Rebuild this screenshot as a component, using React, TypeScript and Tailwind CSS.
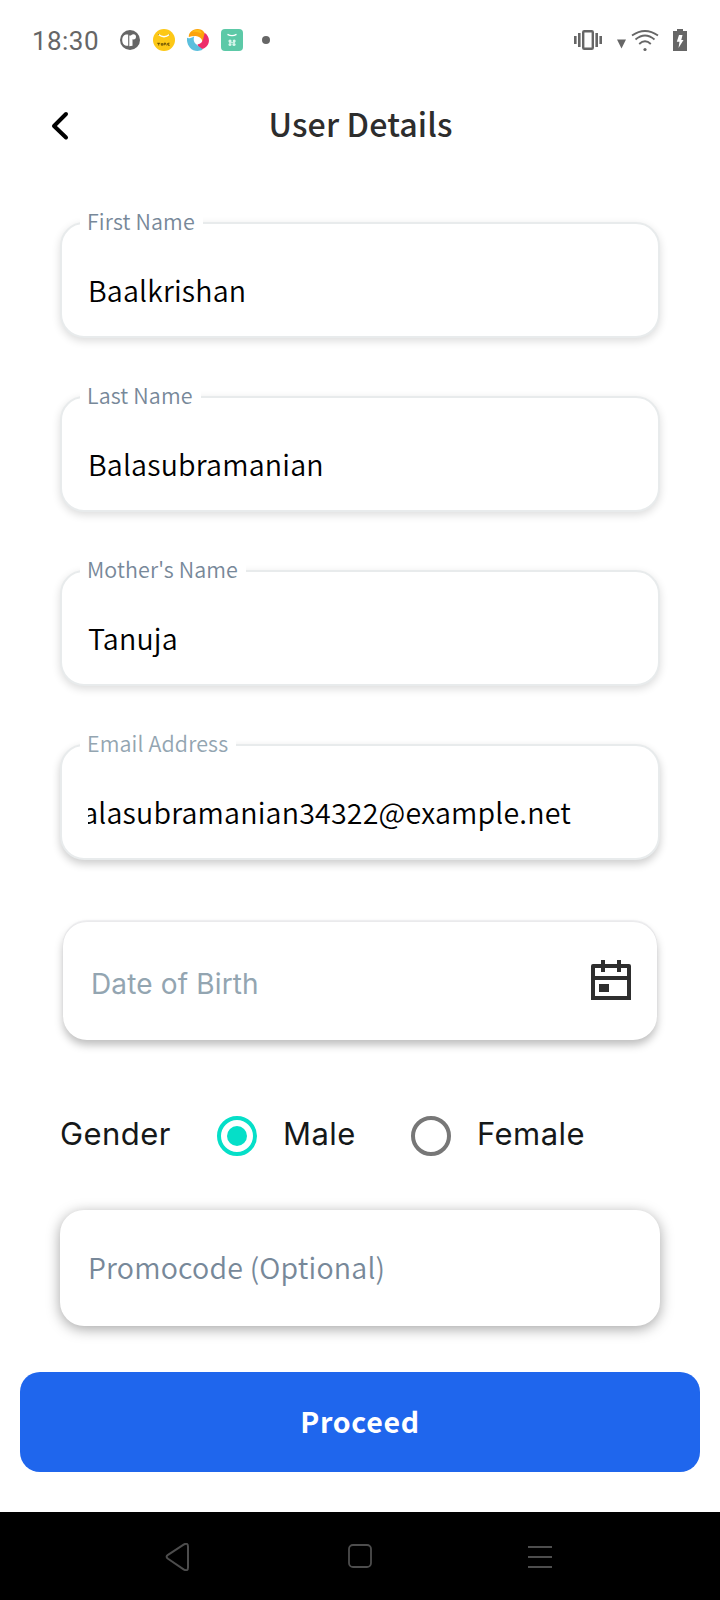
import type { ReactNode } from "react";

const sans = "font-['Noto_Sans_CJK_JP','Noto_Sans_CJK_SC',sans-serif]";

function StatusBar() {
  return (
    <div className="flex h-20 items-center pl-8 pr-8 text-[#666]">
      <span className="w-[67px] whitespace-nowrap font-[Roboto,sans-serif] text-[26px] leading-none tracking-[0.450px] mt-[2px]">18:30</span>
      <svg className="ml-[21px]" width="20" height="20" viewBox="0 0 20 20">
        <circle cx="10" cy="10" r="10" fill="#666" />
        <path d="M5.800 4.500H8.200v11.200H6Q2.200 14.500 2.200 10T5.800 4.500Z" fill="#fff" />
        <path d="M9.300 5.500h3.200v10.200l-3.200.6Z" fill="#fff" />
        <circle cx="13.400" cy="6.800" r="2.600" fill="#fff" />
      </svg>
      <svg className="ml-[13px]" width="22" height="22" viewBox="0 0 22 22">
        <circle cx="11" cy="11" r="11" fill="#fdc816" />
        <path d="M5.500 5.500q5.500 4.500 11 0" fill="none" stroke="#fff" strokeWidth="1.300" />
        <path d="M5.500 5.500l.5.500m10-.5l.5.300" stroke="#664b00" strokeWidth="1" />
        <path d="M4.200 14.300h3m-1.500 0v2.200M8.300 14.600h1.500v1.600H8.300Zm2.800 1.800v-2.200h1.600v1h-1.400m2.400 1.200 1-2.100m1.800-.1h-1.300v2.100h1.500" fill="none" stroke="#4f3b00" strokeWidth=".8" />
      </svg>
      <svg className="ml-3" width="22" height="22" viewBox="0 0 22 22">
        <path d="M1.800 8C1.500 4 5 .2 10.500 0c4-.1 7.400 2.500 7.600 6.300.1 2.300-.7 5-2.300 7.200C15.300 10 12.800 7.600 9.800 7.200 7 6.800 4.300 7.200 1.800 8Z" fill="#fca30b" />
        <path d="M4.500 3Q8 0 12 .8q2.500 1.200 2.800 3.700Q9 2 4.500 3Z" fill="#fdbe14" />
        <path d="M17.600 3.800c3.700 2.600 5.300 6.900 3.800 10.600-1.500 3.800-5.400 6.200-9.400 5.400l-1.500-4.300c3.200-.6 5-2.500 5.600-5.200.5-2.400 1.300-4.500 1.500-6.500Z" fill="#ed2d6b" />
        <path d="M0 8.800c1.600 1 4 .4 7.300-1.600-1.300 3.300-.5 6.300 2.300 8.300 1.500 2 4.400 2.900 6.100 5C11.500 23 6.200 22.200 3 18.700.6 16-.4 12.300 0 8.800Z" fill="#5bbfdd" />
      </svg>
      <svg className="ml-3" width="22" height="22" viewBox="0 0 22 22">
        <rect width="22" height="22" rx="4" fill="#5cc9a7" />
        <path d="M6.500 5.300q4.500 2.700 9 0" fill="none" stroke="#fff" strokeWidth="1.400" />
        <g fill="#d8f7ec">
          <circle cx="9" cy="12" r="1.600" />
          <circle cx="13.200" cy="12" r="1.500" />
          <circle cx="9" cy="15.500" r="1.500" />
          <circle cx="13" cy="15.500" r="1.600" />
          <path d="M8 13.200h6v1H8Z" />
        </g>
      </svg>
      <span className="ml-[19px] size-2 rounded-full bg-[#666]" />
      <svg className="ml-auto" width="28" height="20" viewBox="0 0 28 20" fill="#666">
        <path d="M0 6h2.600v8H0Zm4-3h2.600v14H4Zm17.400 0H24v14h-2.600Zm4 3H28v8h-2.600Z" />
        <rect x="9.200" y="1.200" width="9.600" height="17.600" rx="1" fill="none" stroke="#666" strokeWidth="2.400" />
      </svg>
      <svg className="ml-[15px] mt-[7px]" width="9" height="10" viewBox="0 0 9 10" fill="#666">
        <path d="M0 0.500h9L4.500 9.500Z" />
      </svg>
      <svg className="ml-[5px]" width="28" height="24" viewBox="0 0 28 24" fill="none" stroke="#666" strokeWidth="1.800">
        <path d="M1 7.500q13-9 26 0M4.500 11.500q9.500-8 19 0M8.200 16q5.800-5.500 11.600 0" />
        <circle cx="14" cy="21.500" r="1.600" fill="#666" stroke="none" />
      </svg>
      <svg className="ml-[14px] mr-[1px]" width="14" height="22" viewBox="0 0 14 22">
        <path d="M4 0h6v2h4v20H0V2h4Z" fill="#666" />
        <path d="M6 6h3.500l-1.200 5H10.500l-5 8 1-6.300H3.800Z" fill="#fff" />
      </svg>
    </div>
  );
}

function Header() {
  return (
    <header className="flex h-[92px] items-start px-[51px] pt-[23px]">
      <svg className="mt-[8px]" width="18" height="30" viewBox="0 0 18 30" fill="none" stroke="#000" strokeWidth="4" strokeLinecap="round" strokeLinejoin="round">
        <path d="M15 3 3 15l12 11.500" />
      </svg>
      <h1 className={`${sans} flex-1 pr-[17px] text-center text-[32.200px] font-medium leading-10 tracking-[0.120px] text-[#2d2d2d]`}>User Details</h1>
    </header>
  );
}

function Field({ label, labelClass, shadow, children }: { label: string; labelClass: string; shadow: string; children: ReactNode }) {
  return (
    <div className={`relative h-[116px] rounded-[24px] border-2 border-[#e8ebec] bg-white pl-[26px] pt-[46px] ${shadow}`}>
      <label className={`${sans} absolute left-[18px] -top-[13px] bg-white pl-[7px] pr-2 text-[21.450px] font-[350] leading-5 tracking-[0.130px] ${labelClass}`}>{label}</label>
      <div className={`${sans} flex h-10 w-[483px] overflow-hidden whitespace-nowrap text-[28.600px] font-[350] leading-10 tracking-[0.180px] text-black`}>{children}</div>
    </div>
  );
}

function Radio({ checked }: { checked: boolean }) {
  return (
    <span className={`flex size-10 items-center justify-center rounded-full border-4 ${checked ? "border-[#05dfc8]" : "border-[#777]"}`}>
      {checked && <span className="size-5 rounded-full bg-[#05dfc8]" />}
    </span>
  );
}

export default function App() {
  const soft = "shadow-[0_3px_8px_rgba(0,0,0,0.14)]";
  return (
    <div className="flex h-[1600px] w-[720px] flex-col overflow-hidden bg-white">
      <StatusBar />
      <Header />
      <main className="flex flex-col px-[60px] pt-[50px]">
        <div className="flex flex-col gap-[58px]">
          <Field label="First Name" labelClass="text-[#778899]" shadow={soft}>Baalkrishan</Field>
          <Field label="Last Name" labelClass="text-[#778899]" shadow={soft}>Balasubramanian</Field>
          <Field label="Mother's Name" labelClass="text-[#778899]" shadow={soft}>Tanuja</Field>
          <Field label="Email Address" labelClass="text-[#93a5b1]" shadow="shadow-[0_4px_9px_rgba(0,0,0,0.2)]">
            <span className="flex w-full justify-end">alasubramanian34322@example.net</span>
          </Field>
        </div>
        <div className="mx-[3px] mt-[62px] flex h-[118px] items-center justify-between rounded-[24px] bg-white pl-7 pr-[26px] shadow-[0_-2px_1px_rgba(90,90,110,0.09),0_5px_9px_rgba(0,0,0,0.26)]">
          <span className="mt-[5px] font-[Inter,sans-serif] text-[28px] leading-10 tracking-[0.150px] text-[#93a5b1]">Date of Birth</span>
          <svg className="-mt-[2px]" width="40" height="40" viewBox="0 0 40 40" fill="#2e2e2e">
            <path fillRule="evenodd" d="M2 4h8V0h4v4h12V0h4v4h8q2 0 2 2v34H0V6q0-2 2-2Zm2 4v8h32V8h-6v4h-4V8H14v4h-4V8Zm0 12v16h32V20Z" />
            <path d="M8 24h10v8H8Z" />
          </svg>
        </div>
        <div className="mt-[76px] flex h-10 items-center font-[Inter,sans-serif] text-[31px] font-normal leading-10 tracking-[0.450px] text-[#151819]">
          <span className="-mt-[5px] w-[157px]">Gender</span>
          <Radio checked />
          <span className="-mt-[5px] ml-[26px] w-[128px]">Male</span>
          <Radio checked={false} />
          <span className="-mt-[5px] ml-[26px]">Female</span>
        </div>
        <div className="mt-[54px] flex h-[116px] items-center rounded-[24px] bg-white pl-7 shadow-[0_3px_14px_rgba(0,0,0,0.36)]">
          <span className={`${sans} -mt-[3px] text-[28.600px] font-[350] leading-10 tracking-[0.180px] text-[#778899]`}>Promocode (Optional)</span>
        </div>
      </main>
      <button className={`${sans} mx-5 mt-[46px] h-[100px] shrink-0 rounded-[20px] bg-[#1f66ed] pb-[3px] text-[28.500px] font-bold leading-10 tracking-[0.700px] text-white`}>Proceed</button>
      <nav className="mt-10 flex h-[88px] shrink-0 items-start bg-black pt-[31px]">
        <svg className="ml-[165px]" width="26" height="28" viewBox="0 0 26 28" fill="none" stroke="#4d4d4d" strokeWidth="2">
          <path d="M3 11.800 18.600 1.600q4.400-2.400 4.400 2v20.800q0 4.400-4.400 2L3 15.800q-2.800-2 0-4Z" />
        </svg>
        <svg className="ml-[157px]" width="24" height="26" viewBox="0 0 24 26" fill="none" stroke="#4d4d4d" strokeWidth="1.800">
          <rect x="1" y="2" width="22" height="22" rx="4" />
        </svg>
        <svg className="ml-[156px]" width="24" height="26" viewBox="0 0 24 26" stroke="#4d4d4d" strokeWidth="2">
          <path d="M0 4h24M0 14h24M0 24h24" />
        </svg>
      </nav>
    </div>
  );
}
